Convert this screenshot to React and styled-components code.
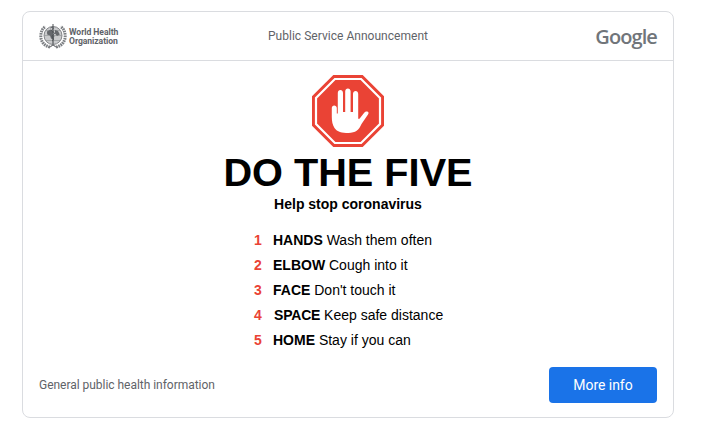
import React from "react";
import styled, { createGlobalStyle } from "styled-components";

const Global = createGlobalStyle`
  html, body { margin: 0; padding: 0; background: #fff; }
  body { font-family: "Liberation Sans", Arial, sans-serif; }
`;
const Page = styled.div`
  width: 704px;
  height: 430px;
  padding: 11px 30px 12px 22px;
  box-sizing: border-box;
`;
const Card = styled.section`
  height: 407px;
  box-sizing: border-box;
  border: 1px solid #dadce0;
  border-radius: 8px;
  display: flex;
  flex-direction: column;
`;
const Header = styled.header`
  height: 49px;
  flex: none;
  box-sizing: border-box;
  border-bottom: 1px solid #dadce0;
  display: grid;
  grid-template-columns: 1fr auto 1fr;
  align-items: center;
  padding: 0 16px;
`;
const WhoLogo = styled.div`
  display: flex;
  align-items: center;
  gap: 2px;
`;
const WhoName = styled.span`
  font: 700 8.6px/9px "Roboto", sans-serif;
  color: #5f6368;
  letter-spacing: -0.05px;
  white-space: nowrap;
  padding-top: 1px;
`;
const Announcement = styled.span`
  font: 400 12px "Roboto", sans-serif;
  color: #5f6368;
  letter-spacing: 0.03px;
`;
const GoogleMark = styled.span`
  justify-self: end;
  font: 600 20px "Open Sans", sans-serif;
  color: #70757a;
  letter-spacing: -0.9px;
`;
const Body = styled.main`
  flex: 1;
  display: flex;
  flex-direction: column;
  align-items: center;
  padding-top: 14px;
`;
const Title = styled.h1`
  margin: 2px 0 0;
  font: 700 39.7px/46px "Liberation Sans", sans-serif;
  color: #000;
`;
const Subtitle = styled.h2`
  margin: 0;
  font: 700 14px/18px "Liberation Sans", sans-serif;
  color: #000;
`;
const Steps = styled.ol`
  list-style: none;
  margin: 15px 0 0 231px;
  padding: 0;
  align-self: flex-start;
`;
const Step = styled.li`
  height: 25px;
  font-size: 14px;
  line-height: 25px;
  color: #000;
  white-space: nowrap;
`;
const Num = styled.span`
  display: inline-block;
  width: 19px;
  font-weight: 700;
  color: #ea4335;
  margin-right: ${(p) => (p.$wide ? 1 : 0)}px;
`;
const Word = styled.b`
  font-weight: 700;
  letter-spacing: ${(p) => (p.$wide ? -0.2 : 0)}px;
`;
const Footer = styled.footer`
  margin-top: auto;
  width: 100%;
  box-sizing: border-box;
  display: flex;
  align-items: center;
  justify-content: space-between;
  padding: 0 16px 14px;
`;
const Note = styled.span`
  font: 400 12px "Roboto", sans-serif;
  color: #5f6368;
  letter-spacing: -0.03px;
`;
const MoreInfo = styled.button`
  width: 108px;
  height: 36px;
  border: 0;
  border-radius: 4px;
  background: #1a73e8;
  color: #fff;
  font: 400 14px "Roboto", sans-serif;
  letter-spacing: -0.05px;
`;

const Emblem = () => (
  <svg width="28" height="26" viewBox="0 0 28 26" fill="none">
    <g stroke="#7c7f83" strokeWidth="3" strokeDasharray="1.7 .7">
      <path d="M11 24C5 23 1.600 18 1.800 12.500 2 8.500 3.500 5.500 6.500 3.500" />
      <path d="M17 24C23 23 26.400 18 26.200 12.500 26 8.500 24.500 5.500 21.500 3.500" />
    </g>
    <circle cx="14" cy="12.500" r="9" fill="#c9cacc" stroke="#77797d" strokeWidth=".9" />
    <path d="M5 12.500h18M14 4v17M7 7.500h14M7 17.500h14" stroke="#8b8e91" strokeWidth=".6" />
    <path d="M8 8.500l3.500-2 3 2-1 3 2 1.500-1.500 3.500-2-1-1-3-2.800-1zM16 7l3 1 1.800 3.500-2.800 1.500-2-2.500z" fill="#65686c" />
    <path d="M14 1v21" stroke="#4f5256" strokeWidth="1" />
    <path d="M11.500 5c2-1.500 3.500-.5 2.500.8s-2.500 1.200-.5 2.700 3 1.500 1 3-2 2-.5 3.500-.5 2.500-1 3" stroke="#4f5256" strokeWidth="1" />
    <path d="M9 24.500c3-.5 4-1.500 5-3 1 1.500 2 2.500 5 3" stroke="#77797d" strokeWidth="1.200" />
  </svg>
);

const StopHand = () => (
  <svg width="72" height="72" viewBox="0 0 72 72">
    <path d="M21.300 0h29.400L72 21.300v29.400L50.700 72H21.300L0 50.700V21.300z" fill="#ea4335" />
    <path d="M22.900 4h26.200L68 22.900v26.200L49.100 68H22.900L4 49.100V22.900z" fill="none" stroke="#fff" strokeWidth="2.200" />
    <path
      fill="#fff"
      d="M22.500 53C20.500 50 19.800 46 19.800 42v-9c0-1.500 1.100-2.500 2.400-2.500s2.600 1 2.600 2.500v5.500h1V18c0-1.800 1.200-2.900 2.600-2.900S31 16.200 31 18v19h2.200V16.300c0-1.800 1.200-2.900 2.700-2.900s2.700 1.100 2.700 2.900V37H41V19c0-1.800 1.200-2.900 2.600-2.900s2.600 1.100 2.600 2.900v24.500c.4.600 1 .5 1.500 0l4.500-5.800c1-1.200 2.500-1.700 3.600-1 1 .7.900 1.900.2 2.900l-6.500 9.500C47 55 43.500 58 36.500 58c-6.500 0-11.500-1-14-5z"
    />
  </svg>
);

const steps = [
  ["1", "HANDS", "Wash them often"],
  ["2", "ELBOW", "Cough into it"],
  ["3", "FACE", "Don't touch it"],
  ["4", "SPACE", "Keep safe distance"],
  ["5", "HOME", "Stay if you can"],
];

export default function App() {
  return (
    <>
      <Global />
      <Page>
        <Card>
          <Header>
            <WhoLogo>
              <Emblem />
              <WhoName>
                World Health
                <br />
                Organization
              </WhoName>
            </WhoLogo>
            <Announcement>Public Service Announcement</Announcement>
            <GoogleMark>Google</GoogleMark>
          </Header>
          <Body>
            <StopHand />
            <Title>DO THE FIVE</Title>
            <Subtitle>Help stop coronavirus</Subtitle>
            <Steps>
              {steps.map(([n, w, t]) => (
                <Step key={n}>
                  <Num $wide={n === "4"}>{n}</Num>
                  <Word $wide={n === "4"}>{w}</Word> {t}
                </Step>
              ))}
            </Steps>
            <Footer>
              <Note>General public health information</Note>
              <MoreInfo>More info</MoreInfo>
            </Footer>
          </Body>
        </Card>
      </Page>
    </>
  );
}
